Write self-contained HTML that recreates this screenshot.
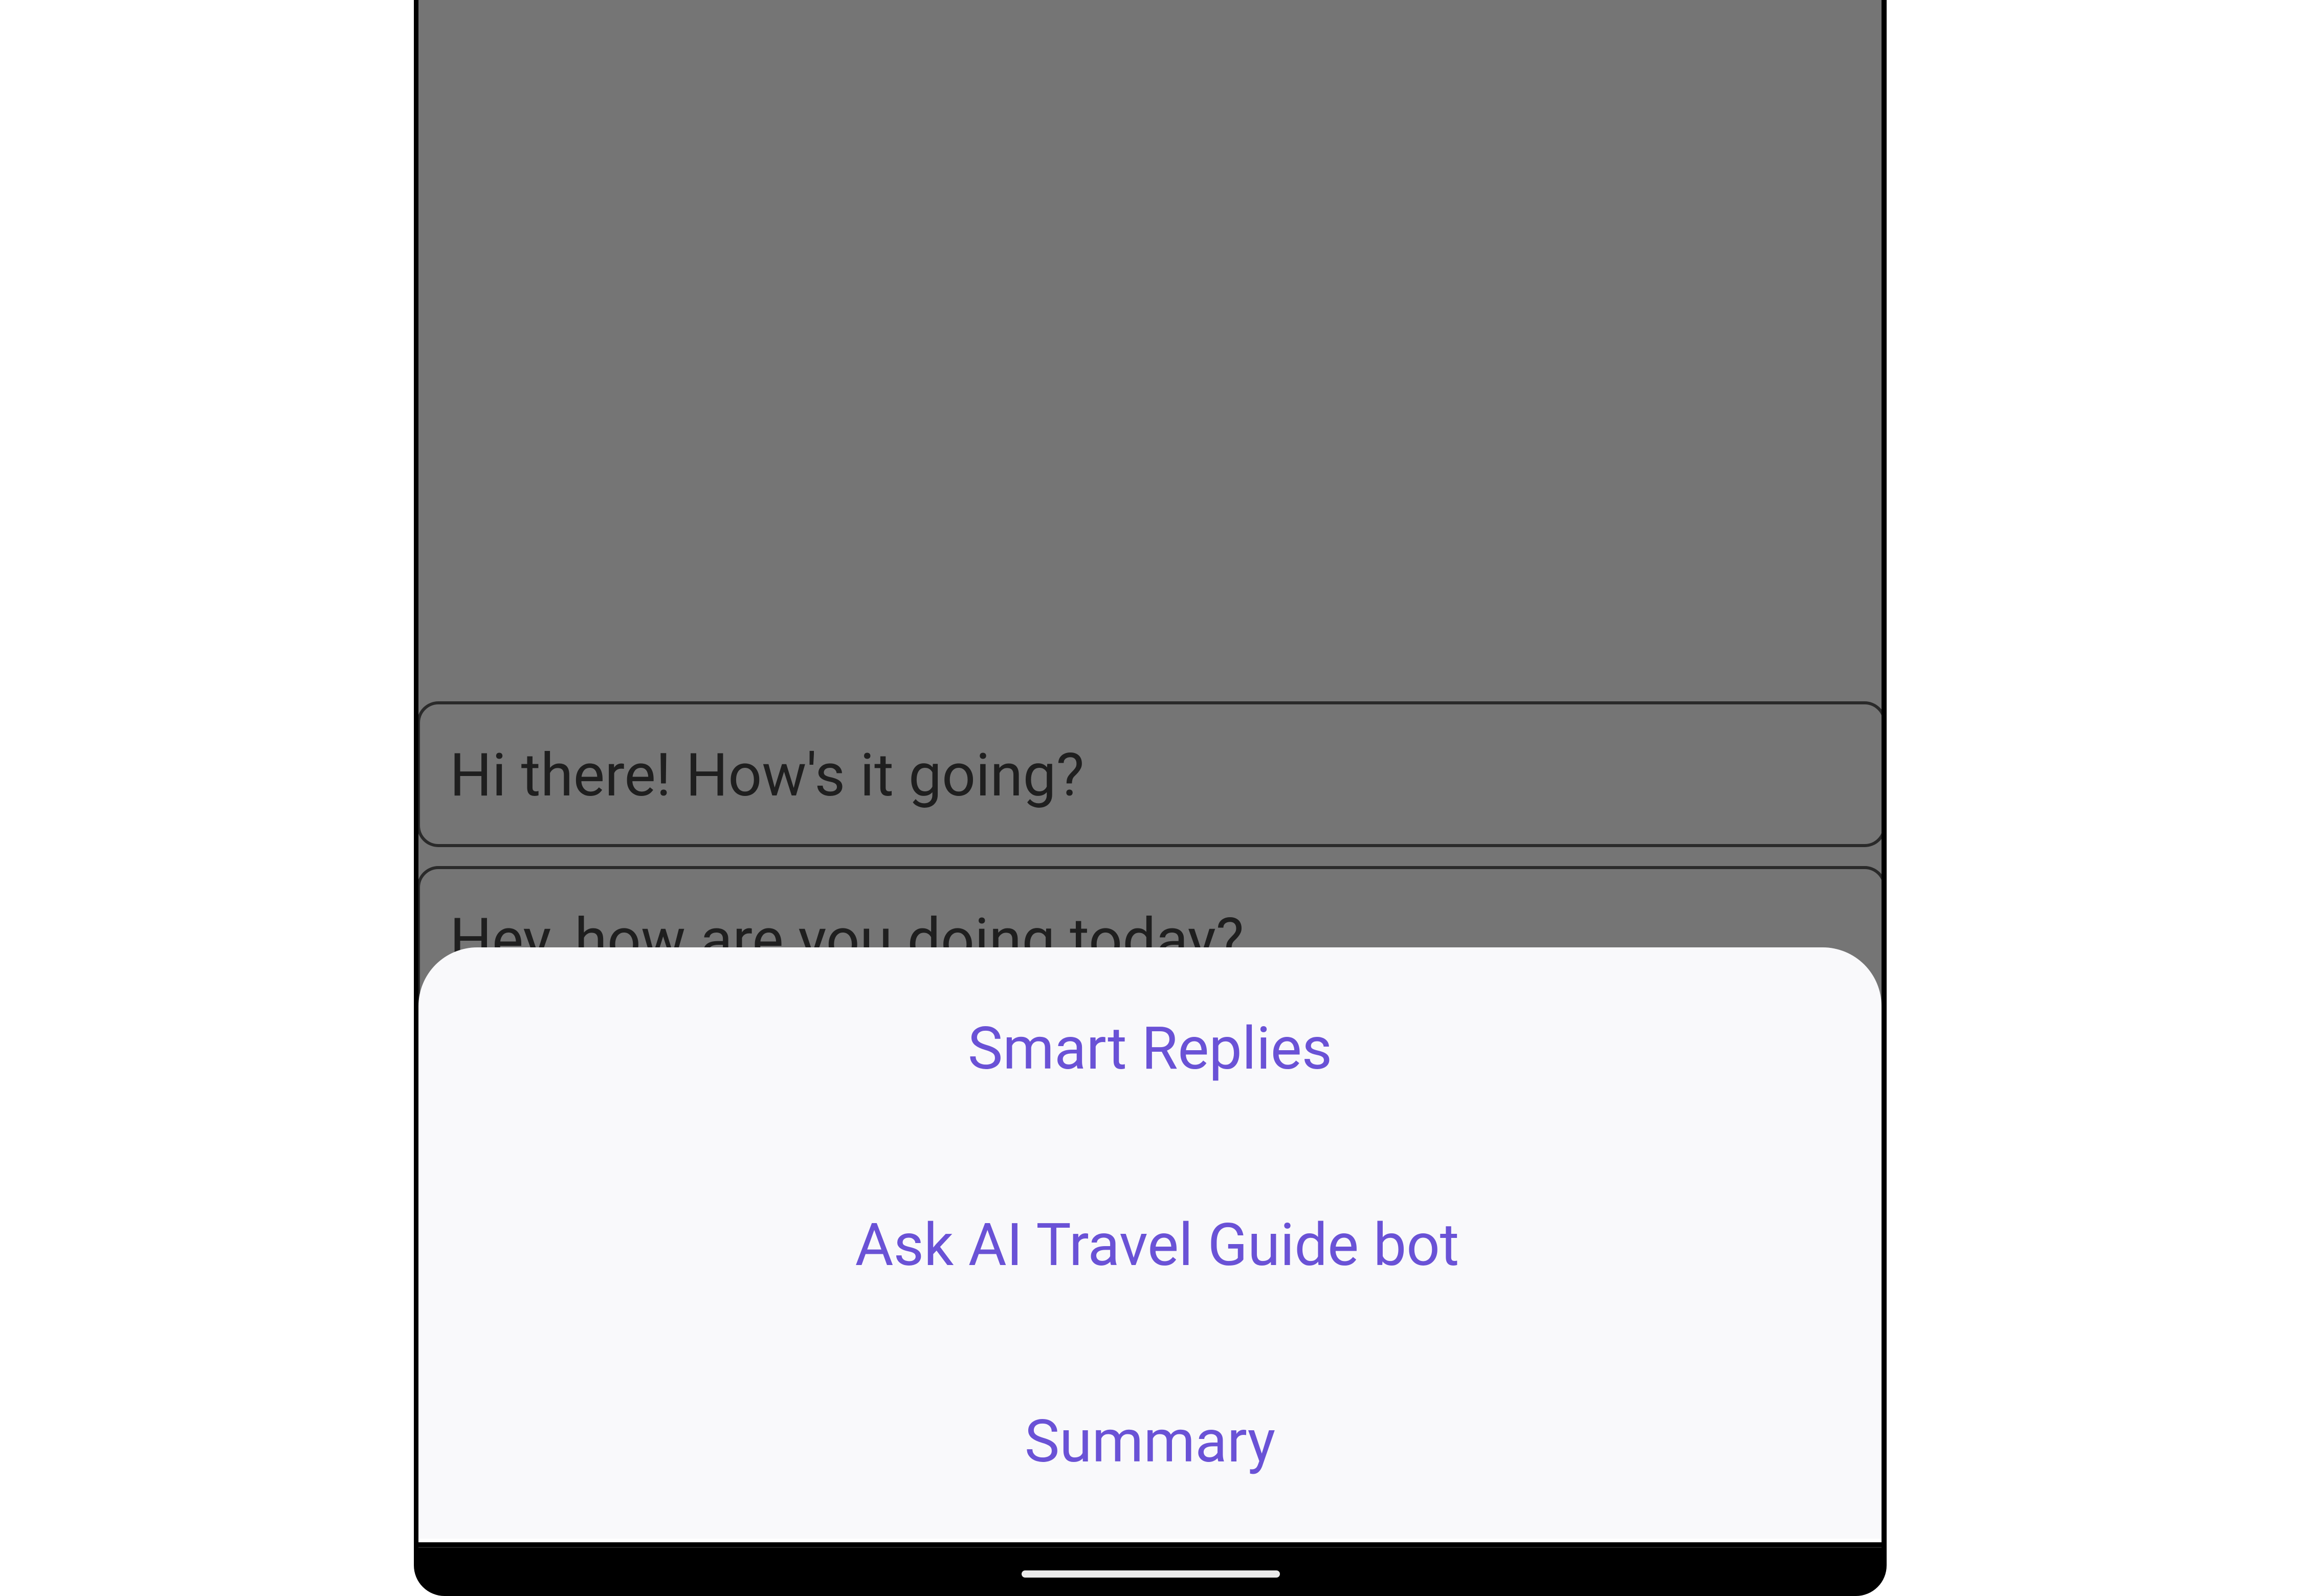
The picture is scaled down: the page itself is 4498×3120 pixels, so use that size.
<!DOCTYPE html>
<html><head><meta charset="utf-8"><style>
html,body{margin:0;padding:0;width:4498px;height:3120px;background:#fff;overflow:hidden;position:relative;font-family:"Roboto","Liberation Sans",sans-serif;}
.frame{position:absolute;left:809px;top:-20px;width:2879px;height:3140px;background:#000;border-radius:0 0 60px 60px;}
.screen{position:absolute;left:818px;top:0;width:2860px;height:3015px;background:#757575;overflow:hidden;}
.bubble{position:absolute;left:-3px;width:2872px;border:6px solid #2a2a2a;border-radius:42px;box-sizing:border-box;}
.bubble span{position:absolute;left:58px;font-size:116px;color:#1f1f1f;white-space:nowrap;line-height:1;}
.sheet{position:absolute;left:0;top:1852px;width:2860px;height:1156px;background:#f9f9fb;border-radius:115px 115px 0 0;}
.white{position:absolute;left:0;top:3008px;width:2860px;height:7px;background:#fff;}
.item{position:absolute;left:0;width:2860px;text-align:center;font-size:115px;color:#6a52d6;line-height:1;}
.line{position:absolute;left:818px;top:3024px;width:2860px;height:2px;background:#222;}
.bar{position:absolute;left:1997px;top:3070px;width:505px;height:14px;background:#ebebeb;border-radius:7px;}
</style></head><body>
<div class="frame"></div>
<div class="screen">
  <div class="bubble" style="top:1371px;height:285px;"><span style="top:81px;">Hi there! How's it going?</span></div>
  <div class="bubble" style="top:1693px;height:300px;"><span style="top:81px;">Hey, how are you doing today?</span></div>
  <div class="sheet">
    <div class="item" style="top:141px;">Smart Replies</div>
    <div class="item" style="top:525px;left:14px;">Ask AI Travel Guide bot</div>
    <div class="item" style="top:909px;">Summary</div>
  </div>
  <div class="white"></div>
</div>
<div class="line"></div>
<div class="bar"></div>
</body></html>
